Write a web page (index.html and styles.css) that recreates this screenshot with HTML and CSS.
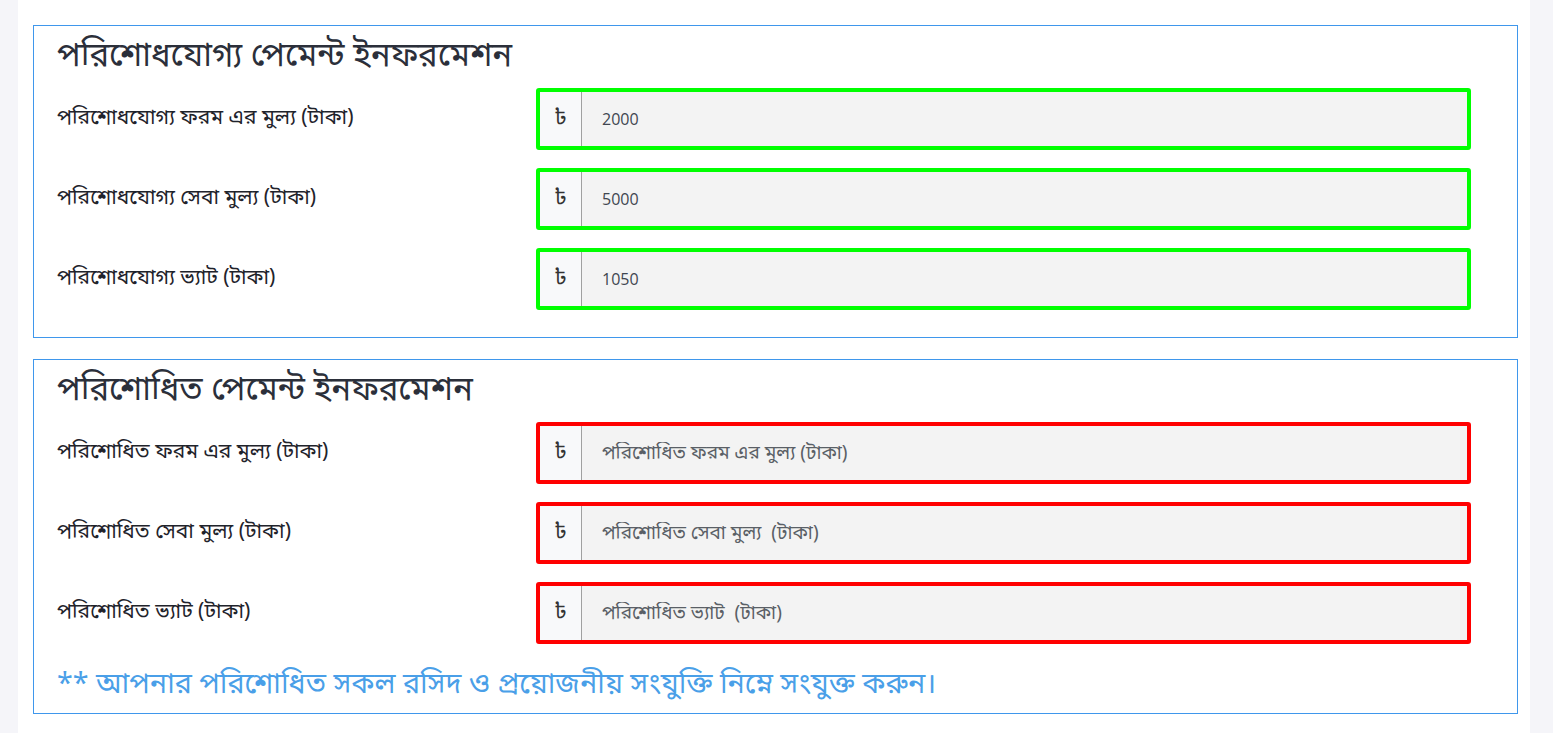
FILE: index.html
```html
<!DOCTYPE html>
<html lang="bn">
<head>
<meta charset="utf-8">
<title>Payment Information</title>
<link rel="stylesheet" href="styles.css">
</head>
<body>
<div class="page">
  <main class="main">
    <section class="card card-due">
      <h2 class="card-title">পরিশোধযোগ্য পেমেন্ট ইনফরমেশন</h2>
      <div class="form-row">
        <label class="form-label">পরিশোধযোগ্য ফরম এর মুল্য (টাকা)</label>
        <div class="input-group ok">
          <span class="addon">৳</span>
          <input class="field" type="text" value="2000" readonly>
        </div>
      </div>
      <div class="form-row">
        <label class="form-label">পরিশোধযোগ্য সেবা মুল্য (টাকা)</label>
        <div class="input-group ok">
          <span class="addon">৳</span>
          <input class="field" type="text" value="5000" readonly>
        </div>
      </div>
      <div class="form-row">
        <label class="form-label">পরিশোধযোগ্য ভ্যাট (টাকা)</label>
        <div class="input-group ok">
          <span class="addon">৳</span>
          <input class="field" type="text" value="1050" readonly>
        </div>
      </div>
    </section>

    <section class="card card-paid">
      <h2 class="card-title">পরিশোধিত পেমেন্ট ইনফরমেশন</h2>
      <div class="form-row">
        <label class="form-label">পরিশোধিত ফরম এর মুল্য (টাকা)</label>
        <div class="input-group err">
          <span class="addon">৳</span>
          <input class="field" type="text" placeholder="পরিশোধিত ফরম এর মুল্য (টাকা)">
        </div>
      </div>
      <div class="form-row">
        <label class="form-label">পরিশোধিত সেবা মুল্য (টাকা)</label>
        <div class="input-group err">
          <span class="addon">৳</span>
          <input class="field" type="text" placeholder="পরিশোধিত সেবা মুল্য  (টাকা)">
        </div>
      </div>
      <div class="form-row">
        <label class="form-label">পরিশোধিত ভ্যাট (টাকা)</label>
        <div class="input-group err">
          <span class="addon">৳</span>
          <input class="field" type="text" placeholder="পরিশোধিত ভ্যাট  (টাকা)">
        </div>
      </div>
      <p class="note">** আপনার পরিশোধিত সকল রসিদ ও প্রয়োজনীয় সংযুক্তি নিম্নে সংযুক্ত করুন।</p>
    </section>
  </main>
</div>
</body>
</html>
```

FILE: styles.css
```css
* { box-sizing: border-box; }
html, body { margin: 0; padding: 0; }
body {
  background: #f5f5f9;
  font-family: "Noto Sans Bengali", "Open Sans", "Noto Sans", sans-serif;
  color: #2b2f36;
}
.page {
  padding: 0 23px 0 18px;
  min-height: 733px;
}
.main {
  background: #fff;
  padding: 25px 12px 20px 15px;
  min-height: 733px;
  display: flex;
  flex-direction: column;
  gap: 21px;
}
.card {
  border: 1px solid #3f97ec;
  padding: 12px 46px 9px 23px;
}
.card-due { padding-bottom: 27px; }
.card-title {
  margin: 0 0 10px;
  font-size: 33px;
  font-weight: 400;
  line-height: 40px;
  color: #2b2f3a;
}
.form-row {
  display: grid;
  grid-template-columns: 479px 1fr;
  align-items: center;
  margin-bottom: 18px;
}
.card-due .form-row:last-of-type { margin-bottom: 0; }
.form-label {
  font-size: 21px;
  color: #1f232b;
}
.input-group {
  display: flex;
  height: 62px;
  border: 4px solid #00ff00;
  border-radius: 3px;
}
.input-group.err { border-color: #ff0000; }
.addon {
  width: 42px;
  display: flex;
  align-items: center;
  justify-content: center;
  background: #f8f9fa;
  border-right: 1px solid #a0a0a0;
  font-size: 22px;
  color: #333;
}
.field {
  flex: 1;
  min-width: 0;
  border: 0;
  background: #f3f3f3;
  padding: 0 20px;
  font-family: "Open Sans", "Noto Sans Bengali", sans-serif;
  font-size: 16px;
  color: #404650;
  outline: none;
}
.field::placeholder {
  color: #5a5f66;
  opacity: 1;
  font-size: 19px;
  font-family: "Noto Sans Bengali", "Open Sans", sans-serif;
}
.note {
  margin: 24px 0 0;
  font-size: 28.7px;
  line-height: 36px;
  color: #4a9fe8;
}
```
